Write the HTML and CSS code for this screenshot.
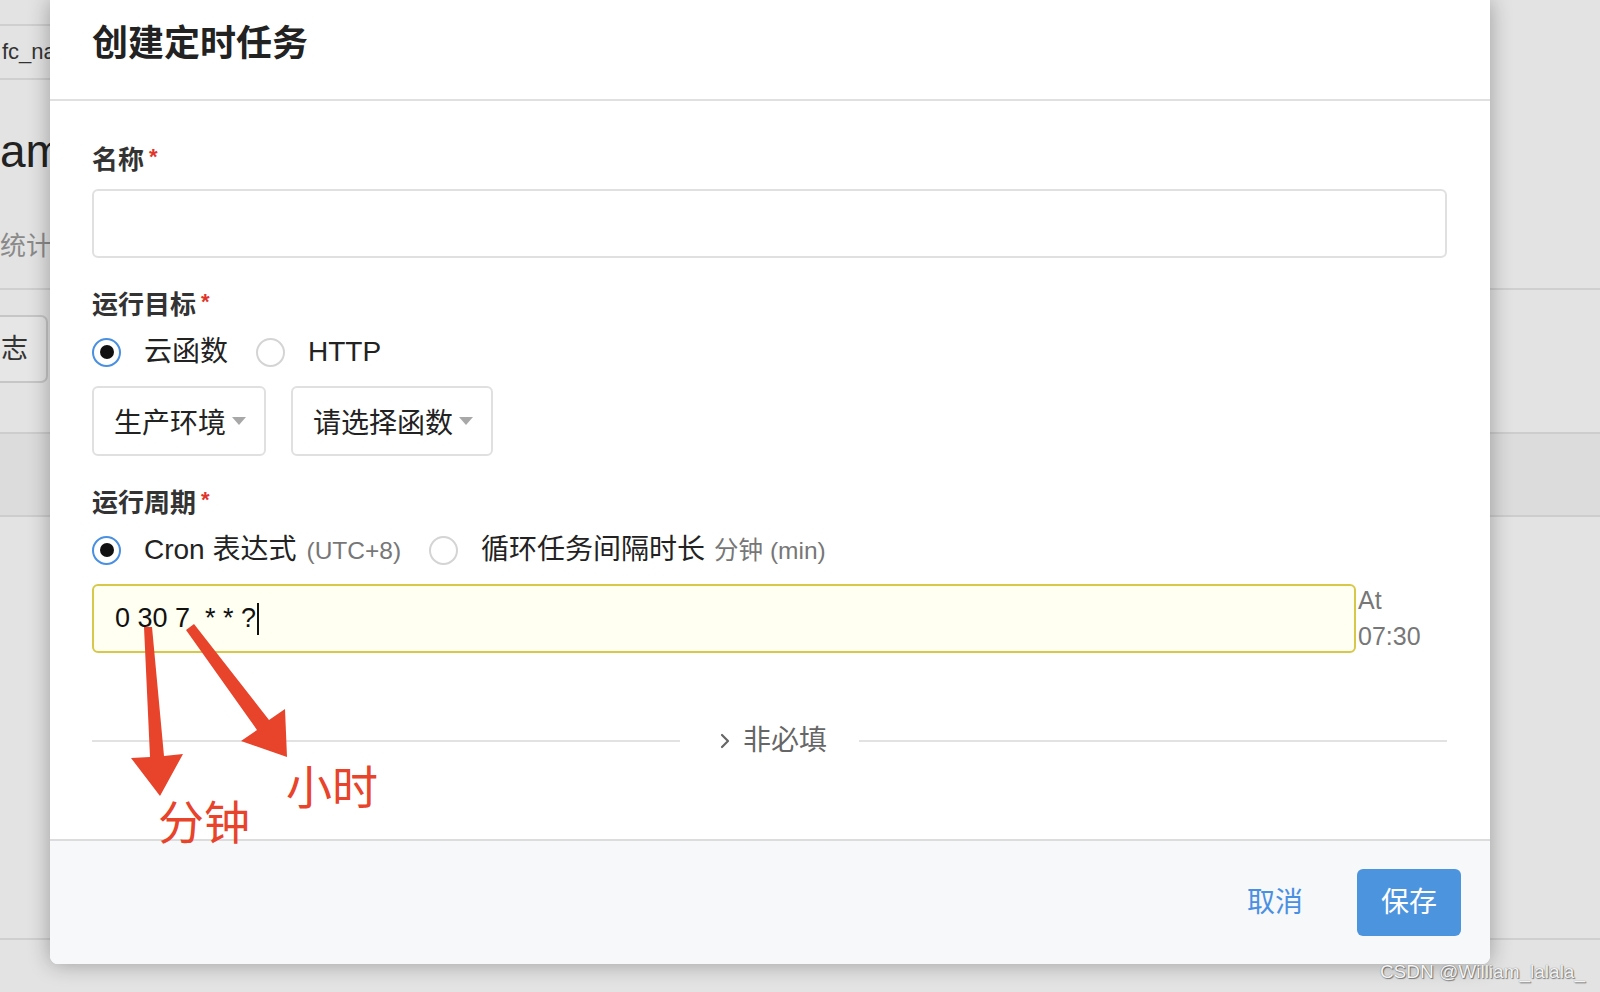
FILE: index.html
```html
<!DOCTYPE html>
<html lang="zh-CN">
<head>
<meta charset="utf-8">
<title>创建定时任务</title>
<link rel="stylesheet" href="styles.css">
</head>
<body>
<div class="page">
  <div class="bg">
    <div class="bg-field">fc_name</div>
    <div class="bg-title">ame</div>
    <div class="bg-sub">统计信息</div>
    <div class="bg-rule"></div>
    <div class="bg-btn">志</div>
    <div class="bg-band"></div>
    <div class="bg-rule bg-rule-bottom"></div>
  </div>

  <div class="modal">
    <div class="modal-header">
      <h1 class="modal-title">创建定时任务</h1>
    </div>
    <div class="modal-body">
      <div class="field-label">名称<span class="req">*</span></div>
      <div class="text-input"></div>

      <div class="field-label next">运行目标<span class="req">*</span></div>
      <div class="radio-row">
        <label class="radio-opt"><span class="radio checked"></span><span>云函数</span></label>
        <label class="radio-opt"><span class="radio"></span><span>HTTP</span></label>
      </div>
      <div class="select-row">
        <div class="select"><span>生产环境</span><span class="caret-down"></span></div>
        <div class="select"><span>请选择函数</span><span class="caret-down"></span></div>
      </div>

      <div class="field-label next">运行周期<span class="req">*</span></div>
      <div class="radio-row">
        <label class="radio-opt"><span class="radio checked"></span><span>Cron 表达式<span class="muted muted-utc">(UTC+8)</span></span></label>
        <label class="radio-opt"><span class="radio"></span><span>循环任务间隔时长<span class="muted muted-min">分钟 (min)</span></span></label>
      </div>
      <div class="cron-row">
        <div class="cron-input"><span class="cron-value">0 30 7  * * ?</span><span class="text-caret"></span></div>
        <div class="cron-hint"><span class="cron-hint-text">At 07:30</span></div>
      </div>

      <div class="divider">
        <div class="divider-line"></div>
        <div class="divider-toggle">
          <svg class="chevron" width="10" height="16" viewBox="0 0 10 16"><path d="M2 2 L8 8 L2 14" fill="none" stroke="#666" stroke-width="2.2" stroke-linecap="round" stroke-linejoin="round"/></svg>
          <span>非必填</span>
        </div>
        <div class="divider-line"></div>
      </div>
    </div>
    <div class="modal-footer">
      <button class="btn-text">取消</button>
      <button class="btn-primary">保存</button>
    </div>
  </div>

  <svg class="arrows" width="1600" height="992" viewBox="0 0 1600 992">
    <polygon points="144,627 152,627 164,756 183,754 160,796 131,758 150,757" fill="#e8432b"/>
    <polygon points="186,630 194,624 269,720 285,709 287,757 241,741 257,730" fill="#e8432b"/>
  </svg>
  <div class="annot annot-min">分钟</div>
  <div class="annot annot-hour">小时</div>

  <div class="watermark">CSDN @William_lalala_</div>
</div>
</body>
</html>
```

FILE: styles.css
```css
html, body {
  margin: 0;
  padding: 0;
}

body {
  background: #e3e3e3;
  font-family: "Liberation Sans", "Noto Sans CJK SC", sans-serif;
  color: #333;
  overflow: hidden;
}

.page {
  position: relative;
  width: 1600px;
  height: 992px;
  overflow: hidden;
}

/* ---------- background page (behind modal) ---------- */
.bg {
  padding-top: 24px;
}

.bg-field {
  width: 420px;
  height: 56px;
  box-sizing: border-box;
  border-top: 2px solid #cfcfcf;
  border-bottom: 2px solid #cfcfcf;
  font-size: 22px;
  line-height: 52px;
  color: #333;
  padding-left: 2px;
}

.bg-title {
  margin-top: 43px;
  font-size: 46px;
  line-height: 56px;
  color: #222;
}

.bg-sub {
  margin-top: 49px;
  font-size: 26px;
  line-height: 36px;
  color: #8a8a8a;
}

.bg-rule {
  margin-top: 24px;
  height: 2px;
  background: #cfcfcf;
}

.bg-btn {
  margin-top: 25px;
  width: 48px;
  height: 68px;
  box-sizing: border-box;
  border: 2px solid #c6c6c6;
  border-left: none;
  border-radius: 0 7px 7px 0;
  background: #e6e6e6;
  font-size: 27px;
  line-height: 64px;
  padding-left: 1px;
  color: #333;
}

.bg-band {
  margin-top: 49px;
  height: 85px;
  box-sizing: border-box;
  background: #dcdcdc;
  border-top: 2px solid #cdcdcd;
  border-bottom: 2px solid #cdcdcd;
}

.bg-rule-bottom {
  margin-top: 421px;
}

/* ---------- modal ---------- */
.modal {
  position: absolute;
  left: 50px;
  top: 0;
  width: 1440px;
  height: 964px;
  background: #fff;
  border-radius: 0 0 8px 8px;
  box-shadow: 0 0 22px rgba(0, 0, 0, 0.32);
  display: flex;
  flex-direction: column;
  overflow: hidden;
}

.modal-header {
  box-sizing: border-box;
  height: 101px;
  padding: 0 0 12px 42px;
  display: flex;
  align-items: center;
  border-bottom: 2px solid #e0e0e0;
  flex: 0 0 auto;
}

.modal-title {
  margin: 0;
  font-size: 36px;
  font-weight: 700;
  color: #222;
  line-height: 44px;
}

.modal-body {
  flex: 1 1 auto;
  padding: 41px 43px 0 42px;
}

.field-label {
  font-size: 26px;
  font-weight: 700;
  line-height: 36px;
  color: #333;
}

.field-label.next {
  margin-top: 29px;
}

.req {
  display: inline-block;
  vertical-align: top;
  margin-left: 5px;
  padding-top: 4px;
  font-size: 22px;
  line-height: 22px;
  color: #e0352b;
  font-weight: 700;
}

.text-input {
  margin-top: 11px;
  height: 69px;
  box-sizing: border-box;
  border: 2px solid #e0e0e0;
  border-radius: 6px;
  background: #fff;
}

.radio-row {
  margin-top: 11px;
  height: 36px;
  display: flex;
  align-items: center;
  gap: 28px;
  font-size: 28px;
  color: #222;
}

.radio-opt {
  display: inline-flex;
  align-items: center;
  gap: 23px;
  line-height: 36px;
  white-space: nowrap;
}

.radio {
  width: 29px;
  height: 29px;
  box-sizing: border-box;
  border: 2px solid #d4d4d4;
  border-radius: 50%;
  display: inline-flex;
  align-items: center;
  justify-content: center;
  background: #fff;
  flex: 0 0 auto;
}

.radio.checked {
  border-color: #4a90e2;
}

.radio.checked::after {
  content: "";
  width: 14px;
  height: 14px;
  border-radius: 50%;
  background: #111;
}

.muted {
  color: #777;
  font-size: 24.5px;
}

.muted-utc {
  margin-left: 10px;
}

.muted-min {
  margin-left: 9px;
}

.select-row {
  margin-top: 16px;
  display: flex;
  gap: 25px;
}

.select {
  height: 70px;
  box-sizing: border-box;
  border: 2px solid #e0e0e0;
  border-radius: 6px;
  padding: 0 18px 0 20px;
  display: inline-flex;
  align-items: center;
  font-size: 28px;
  color: #222;
  background: #fff;
}

.caret-down {
  margin-left: 6px;
  width: 0;
  height: 0;
  border-left: 7.5px solid transparent;
  border-right: 7.5px solid transparent;
  border-top: 8px solid #a8a8a8;
}

.cron-row {
  margin-top: 16px;
  display: flex;
  align-items: flex-start;
}

.cron-input {
  flex: 1 1 auto;
  height: 69px;
  box-sizing: border-box;
  border: 2px solid #d7c84a;
  border-radius: 6px;
  background: #fffff2;
  padding-left: 21px;
  display: flex;
  align-items: center;
  font-size: 27px;
  color: #111;
}

.cron-value {
  white-space: pre;
}

.text-caret {
  display: inline-block;
  width: 2px;
  height: 32px;
  margin-left: 1px;
  background: #111;
}

.cron-hint {
  flex: 0 0 89px;
  margin-left: 2px;
  margin-top: -2px;
  padding-right: 19px;
  box-sizing: border-box;
  font-size: 25px;
  line-height: 36px;
  color: #777;
}

.divider {
  margin-top: 69px;
  height: 36px;
  display: flex;
  align-items: center;
}

.divider-line {
  flex: 1 1 auto;
  height: 2px;
  background: #e2e2e2;
}

.divider-toggle {
  display: flex;
  align-items: center;
  gap: 13px;
  padding: 0 32px 0 40px;
  font-size: 28px;
  color: #666;
  line-height: 36px;
}

.chevron {
  display: block;
}

.modal-footer {
  flex: 0 0 auto;
  height: 125px;
  box-sizing: border-box;
  border-top: 2px solid #dcdcdc;
  background: #f7f8fa;
  display: flex;
  justify-content: flex-end;
  align-items: center;
  padding-right: 29px;
}

.btn-text {
  border: none;
  background: transparent;
  padding: 0;
  margin-right: 54px;
  font-family: inherit;
  font-size: 28px;
  color: #4a90e2;
  line-height: 36px;
}

.btn-primary {
  border: none;
  height: 67px;
  padding: 0 24px;
  border-radius: 6px;
  background: #4d94df;
  color: #fff;
  font-family: inherit;
  font-size: 28px;
  line-height: 36px;
}

/* ---------- annotations ---------- */
.arrows {
  position: absolute;
  left: 0;
  top: 0;
  pointer-events: none;
}

.annot {
  position: absolute;
  font-family: "Noto Sans CJK SC", sans-serif;
  font-size: 46px;
  line-height: 46px;
  font-weight: 400;
  color: #e8432b;
  white-space: nowrap;
}

.annot-min {
  left: 158px;
  top: 796px;
}

.annot-hour {
  left: 286px;
  top: 761px;
}

.watermark {
  position: absolute;
  right: 15px;
  bottom: 9px;
  font-family: "Liberation Sans", sans-serif;
  font-size: 19px;
  line-height: 22px;
  color: #f4f4f4;
  text-shadow: 0 0 1px #666, 1px 1px 1px rgba(0, 0, 0, 0.45);
  white-space: nowrap;
}
```
